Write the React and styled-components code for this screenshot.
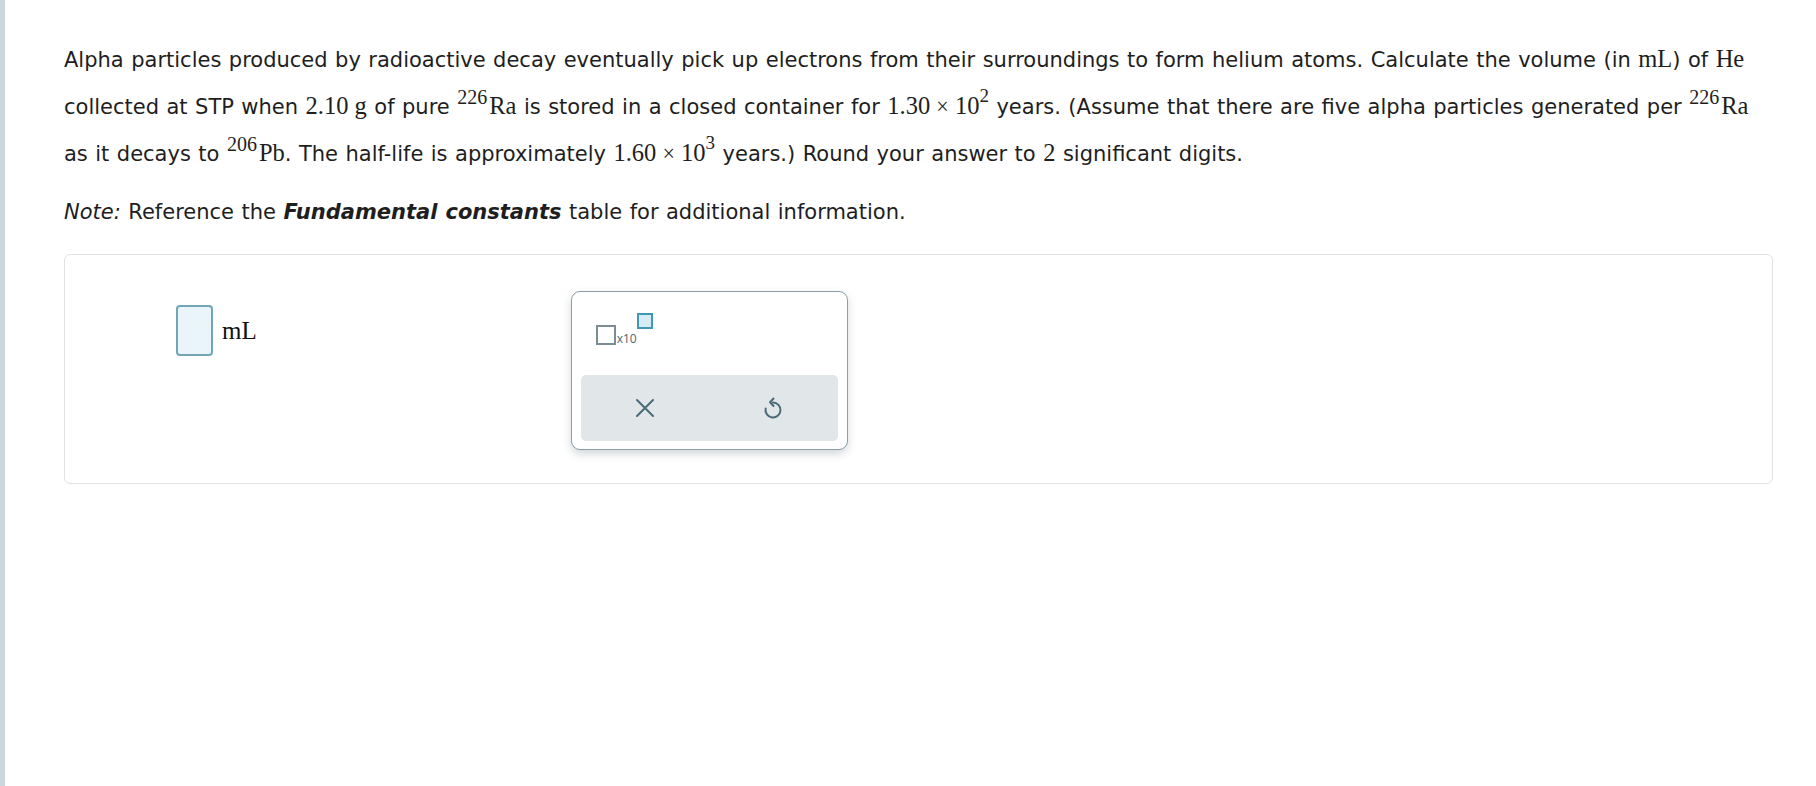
import React from 'react'
import styled, { createGlobalStyle } from 'styled-components'

const Global = createGlobalStyle`
  html, body {
    margin: 0;
    padding: 0;
    background: #fff;
  }
`

const Page = styled.div`
  min-height: 786px;
  box-sizing: border-box;
  border-left: 5px solid #cbd5dc;
  padding: 36px 43px 0 59px;
  font-family: "DejaVu Sans", Verdana, sans-serif;
  font-size: 21px;
  word-spacing: 0.8px;
  color: #1e1e1e;
`

const Question = styled.p`
  margin: 0;
  line-height: 46px;
  white-space: nowrap;
`

const M = styled.span`
  font-family: "Liberation Serif", "Times New Roman", serif;
  font-size: 24.5px;
  word-spacing: 0;
`

const Op = styled.span`
  margin: 0 0.28em;
  font-size: 0.9em;
`

const Sup = styled.sup`
  font-family: "Liberation Serif", "Times New Roman", serif;
  font-size: ${(p) => (p.iso ? '20px' : '19px')};
  line-height: 0;
  vertical-align: ${(p) => (p.iso ? '10px' : '12px')};
  margin-right: ${(p) => (p.iso ? '2px' : '0')};
`

const Note = styled.p`
  margin: 22px 0 0;
  line-height: 26px;
  em { font-style: italic; }
  b { font-weight: bold; font-style: italic; }
`

const AnswerBox = styled.div`
  margin-top: 29px;
  height: 230px;
  box-sizing: border-box;
  border: 1px solid #dfe3e6;
  border-radius: 6px;
  display: flex;
  align-items: flex-start;
  padding: 36px 0 0 111px;
`

const InputRow = styled.div`
  display: flex;
  align-items: center;
  margin-top: 14px;
  gap: 9px;
`

const Input = styled.div`
  width: 33px;
  height: 47px;
  border: 2px solid #72a6b7;
  border-radius: 4px;
  background: #e9f5fa;
`

const Unit = styled.span`
  font-family: "Liberation Serif", "Times New Roman", serif;
  font-size: 25px;
  color: #111;
`

const Palette = styled.div`
  margin-left: 314px;
  width: 277px;
  height: 159px;
  box-sizing: border-box;
  border: 1px solid #8c9ea8;
  border-radius: 9px;
  background: #fff;
  box-shadow: 0 4px 8px rgba(80, 100, 115, 0.25);
  padding: 10px 9px 8px;
  display: flex;
  flex-direction: column;
  justify-content: space-between;
`

const SciRow = styled.div`
  display: flex;
  align-items: flex-end;
  padding: 23px 0 0 15px;
`

const Slot = styled.div`
  width: ${(p) => (p.sup ? 12 : 16)}px;
  height: ${(p) => (p.sup ? 12 : 16)}px;
  border: 2px solid ${(p) => (p.sup ? '#3f98b6' : '#7d8d96')};
  background: ${(p) => (p.sup ? '#d5ecf4' : '#fff')};
  align-self: ${(p) => (p.sup ? 'flex-start' : 'flex-end')};
  margin-top: ${(p) => (p.sup ? '-12px' : '0')};
`

const Times = styled.span`
  font-family: "Open Sans", "DejaVu Sans", sans-serif;
  font-size: 12px;
  color: #4e6570;
  line-height: 12px;
  margin: 0 0 0 1px;
`

const ToolBar = styled.div`
  height: 66px;
  background: #e1e6e9;
  border-radius: 5px;
  display: flex;
  align-items: center;
`

const Tool = styled.button`
  flex: 1;
  border: 0;
  background: none;
  padding: 0;
  height: 40px;
  display: flex;
  align-items: center;
  justify-content: center;
  color: #4b6a78;
`

const CloseIcon = () => (
  <svg width="22" height="22" viewBox="0 0 22 22" fill="none" stroke="currentColor" strokeWidth="2" strokeLinecap="round">
    <path d="M3 3 L19 19 M19 3 L3 19" />
  </svg>
)

const UndoIcon = () => (
  <svg width="22" height="24" viewBox="0 0 22 24" fill="none" stroke="currentColor" strokeWidth="2" strokeLinecap="round" strokeLinejoin="round">
    <path d="M11 6.5 A7.5 7.5 0 1 1 3.6 12.6" />
    <path d="M11.5 2.5 L8 6.3 L11.5 10" />
  </svg>
)

export default function App() {
  return (
    <>
      <Global />
      <Page>
        <Question>
          Alpha particles produced by radioactive decay eventually pick up electrons from their surroundings to form helium atoms. Calculate the volume (in <M>mL</M>) of <M>He</M>
          <br />
          collected at STP when <M>2.10 g</M> of pure <Sup iso>226</Sup><M>Ra</M> is stored in a closed container for <M>1.30<Op>×</Op>10<Sup>2</Sup></M> years. (Assume that there are five alpha particles generated per <Sup iso>226</Sup><M>Ra</M>
          <br />
          as it decays to <Sup iso>206</Sup><M>Pb</M>. The half-life is approximately <M>1.60<Op>×</Op>10<Sup>3</Sup></M> years.) Round your answer to <M>2</M> significant digits.
        </Question>
        <Note>
          <em>Note:</em> Reference the <b>Fundamental constants</b> table for additional information.
        </Note>
        <AnswerBox>
          <InputRow>
            <Input />
            <Unit>mL</Unit>
          </InputRow>
          <Palette>
            <SciRow>
              <Slot />
              <Times>x10</Times>
              <Slot sup />
            </SciRow>
            <ToolBar>
              <Tool aria-label="clear"><CloseIcon /></Tool>
              <Tool aria-label="undo"><UndoIcon /></Tool>
            </ToolBar>
          </Palette>
        </AnswerBox>
      </Page>
    </>
  )
}
